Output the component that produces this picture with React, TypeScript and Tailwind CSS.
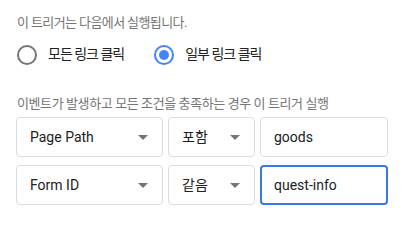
const font = "font-['Roboto','Noto_Sans_CJK_KR',sans-serif]";

function Radio({ checked, label }: { checked?: boolean; label: string }) {
    return (
        <label className="flex items-center gap-[11px]">
            <span
                className={`w-5 h-5 rounded-full border-2 flex items-center justify-center ${checked ? 'border-[#4285f4]' : 'border-[#757575]'}`}
            >
                {checked && <span className="w-[10px] h-[10px] rounded-full bg-[#4285f4]" />}
            </span>
            <span className="text-[14px] text-[#212121] tracking-[-1px]">{label}</span>
        </label>
    );
}

function Select({ value, width }: { value: string; width: string }) {
    return (
        <div className={`${width} h-10 rounded-[4px] border border-[#dadce0] flex items-center justify-between pl-[13px] pr-[14px]`}>
            <span className="text-[14px] text-[#212121]">{value}</span>
            <svg width="10" height="5" viewBox="0 0 10 5" className="fill-[#757575]">
                <path d="M0 0 L10 0 L5 5 Z" />
            </svg>
        </div>
    );
}

function Field({ value, focused }: { value: string; focused?: boolean }) {
    return (
        <div
            className={`w-[128px] h-10 rounded-[4px] flex items-center ${focused ? 'border-2 border-[#3b78e7] pl-3' : 'border border-[#dadce0] pl-[13px]'}`}
        >
            <span className="text-[14px] text-[#212121]">{value}</span>
        </div>
    );
}

export default function App() {
    return (
        <div className={`w-[402px] h-[220px] bg-white pl-4 pt-[14px] ${font}`}>
            <p className="text-[13px] leading-[18px] text-[#757575] tracking-[-0.6px] pl-px">
                이 트리거는 다음에서 실행됩니다.
            </p>
            <div className="flex items-center gap-[30px] mt-[12px] pl-px">
                <Radio label="모든 링크 클릭" />
                <Radio checked label="일부 링크 클릭" />
            </div>
            <p className="text-[13px] leading-[18px] text-[#757575] tracking-[-0.4px] mt-[30px] pl-px">
                이벤트가 발생하고 모든 조건을 충족하는 경우 이 트리거 실행
            </p>
            <div className="flex flex-col gap-[8px] mt-[4px]">
                <div className="flex gap-[5px]">
                    <Select value="Page Path" width="w-[147px]" />
                    <Select value="포함" width="w-[87px]" />
                    <Field value="goods" />
                </div>
                <div className="flex gap-[5px]">
                    <Select value="Form ID" width="w-[147px]" />
                    <Select value="같음" width="w-[87px]" />
                    <Field value="quest-info" focused />
                </div>
            </div>
        </div>
    );
}
